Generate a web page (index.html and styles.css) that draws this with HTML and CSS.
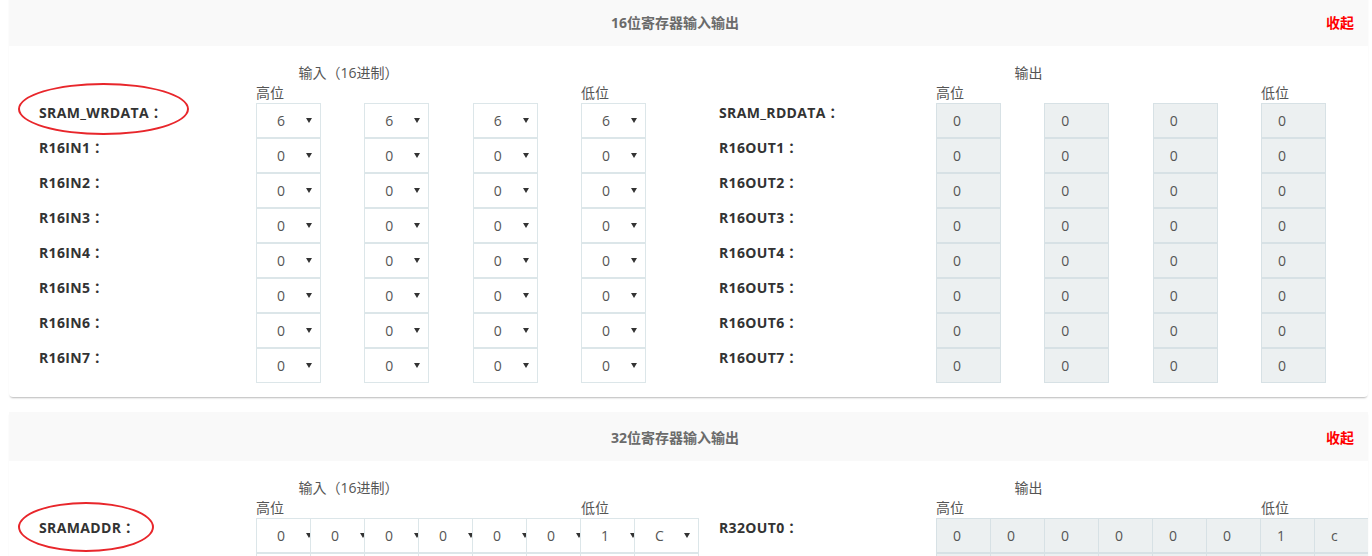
FILE: index.html
```html
<!DOCTYPE html>
<html lang="zh-CN">
<head>
<meta charset="utf-8">
<title>寄存器输入输出</title>
<link rel="stylesheet" href="styles.css">
</head>
<body>
<div class="page">
  <section class="panel">
    <div class="panel-head"><h2 class="panel-title">16位寄存器输入输出</h2><a class="panel-toggle">收起</a></div>
    <div class="panel-body">
      <div class="half">
        <div class="caption-row">输入（16进制）</div>
        <div class="hilo-row grid4"><span>高位</span><span></span><span></span><span>低位</span></div>
        <div class="reg-row"><div class="reg-label"><span class="mark mark-wr"></span>SRAM_WRDATA：</div><div class="grid4"><div class="sel"><span>6</span><i class="caret"></i></div><div class="sel"><span>6</span><i class="caret"></i></div><div class="sel"><span>6</span><i class="caret"></i></div><div class="sel"><span>6</span><i class="caret"></i></div></div></div>
        <div class="reg-row"><div class="reg-label">R16IN1：</div><div class="grid4"><div class="sel"><span>0</span><i class="caret"></i></div><div class="sel"><span>0</span><i class="caret"></i></div><div class="sel"><span>0</span><i class="caret"></i></div><div class="sel"><span>0</span><i class="caret"></i></div></div></div>
        <div class="reg-row"><div class="reg-label">R16IN2：</div><div class="grid4"><div class="sel"><span>0</span><i class="caret"></i></div><div class="sel"><span>0</span><i class="caret"></i></div><div class="sel"><span>0</span><i class="caret"></i></div><div class="sel"><span>0</span><i class="caret"></i></div></div></div>
        <div class="reg-row"><div class="reg-label">R16IN3：</div><div class="grid4"><div class="sel"><span>0</span><i class="caret"></i></div><div class="sel"><span>0</span><i class="caret"></i></div><div class="sel"><span>0</span><i class="caret"></i></div><div class="sel"><span>0</span><i class="caret"></i></div></div></div>
        <div class="reg-row"><div class="reg-label">R16IN4：</div><div class="grid4"><div class="sel"><span>0</span><i class="caret"></i></div><div class="sel"><span>0</span><i class="caret"></i></div><div class="sel"><span>0</span><i class="caret"></i></div><div class="sel"><span>0</span><i class="caret"></i></div></div></div>
        <div class="reg-row"><div class="reg-label">R16IN5：</div><div class="grid4"><div class="sel"><span>0</span><i class="caret"></i></div><div class="sel"><span>0</span><i class="caret"></i></div><div class="sel"><span>0</span><i class="caret"></i></div><div class="sel"><span>0</span><i class="caret"></i></div></div></div>
        <div class="reg-row"><div class="reg-label">R16IN6：</div><div class="grid4"><div class="sel"><span>0</span><i class="caret"></i></div><div class="sel"><span>0</span><i class="caret"></i></div><div class="sel"><span>0</span><i class="caret"></i></div><div class="sel"><span>0</span><i class="caret"></i></div></div></div>
        <div class="reg-row"><div class="reg-label">R16IN7：</div><div class="grid4"><div class="sel"><span>0</span><i class="caret"></i></div><div class="sel"><span>0</span><i class="caret"></i></div><div class="sel"><span>0</span><i class="caret"></i></div><div class="sel"><span>0</span><i class="caret"></i></div></div></div>
      </div>
      <div class="half">
        <div class="caption-row">输出</div>
        <div class="hilo-row grid4"><span>高位</span><span></span><span></span><span>低位</span></div>
        <div class="reg-row"><div class="reg-label">SRAM_RDDATA：</div><div class="grid4"><div class="out">0</div><div class="out">0</div><div class="out">0</div><div class="out">0</div></div></div>
        <div class="reg-row"><div class="reg-label">R16OUT1：</div><div class="grid4"><div class="out">0</div><div class="out">0</div><div class="out">0</div><div class="out">0</div></div></div>
        <div class="reg-row"><div class="reg-label">R16OUT2：</div><div class="grid4"><div class="out">0</div><div class="out">0</div><div class="out">0</div><div class="out">0</div></div></div>
        <div class="reg-row"><div class="reg-label">R16OUT3：</div><div class="grid4"><div class="out">0</div><div class="out">0</div><div class="out">0</div><div class="out">0</div></div></div>
        <div class="reg-row"><div class="reg-label">R16OUT4：</div><div class="grid4"><div class="out">0</div><div class="out">0</div><div class="out">0</div><div class="out">0</div></div></div>
        <div class="reg-row"><div class="reg-label">R16OUT5：</div><div class="grid4"><div class="out">0</div><div class="out">0</div><div class="out">0</div><div class="out">0</div></div></div>
        <div class="reg-row"><div class="reg-label">R16OUT6：</div><div class="grid4"><div class="out">0</div><div class="out">0</div><div class="out">0</div><div class="out">0</div></div></div>
        <div class="reg-row"><div class="reg-label">R16OUT7：</div><div class="grid4"><div class="out">0</div><div class="out">0</div><div class="out">0</div><div class="out">0</div></div></div>
      </div>
    </div>
  </section>

  <section class="panel">
    <div class="panel-head"><h2 class="panel-title">32位寄存器输入输出</h2><a class="panel-toggle">收起</a></div>
    <div class="panel-body">
      <div class="half">
        <div class="caption-row">输入（16进制）</div>
        <div class="hilo-row grid4"><span>高位</span><span></span><span></span><span>低位</span></div>
        <div class="reg-row"><div class="reg-label"><span class="mark mark-addr"></span>SRAMADDR：</div><div class="row8"><div class="sel"><span>0</span><i class="caret"></i></div><div class="sel"><span>0</span><i class="caret"></i></div><div class="sel"><span>0</span><i class="caret"></i></div><div class="sel"><span>0</span><i class="caret"></i></div><div class="sel"><span>0</span><i class="caret"></i></div><div class="sel"><span>0</span><i class="caret"></i></div><div class="sel"><span>1</span><i class="caret"></i></div><div class="sel"><span>C</span><i class="caret"></i></div></div></div>
        <div class="reg-row"><div class="reg-label"></div><div class="row8"><div class="sel"></div><div class="sel"></div><div class="sel"></div><div class="sel"></div><div class="sel"></div><div class="sel"></div><div class="sel"></div><div class="sel"></div></div></div>
      </div>
      <div class="half">
        <div class="caption-row">输出</div>
        <div class="hilo-row grid4"><span>高位</span><span></span><span></span><span>低位</span></div>
        <div class="reg-row"><div class="reg-label">R32OUT0：</div><div class="row8 out8"><div class="out">0</div><div class="out">0</div><div class="out">0</div><div class="out">0</div><div class="out">0</div><div class="out">0</div><div class="out">1</div><div class="out">c</div></div></div>
        <div class="reg-row"><div class="reg-label"></div><div class="row8 out8"><div class="out"></div><div class="out"></div><div class="out"></div><div class="out"></div><div class="out"></div><div class="out"></div><div class="out"></div><div class="out"></div></div></div>
      </div>
    </div>
  </section>
</div>
</body>
</html>
```
FILE: styles.css
```css
html, body {
  margin: 0;
  padding: 0;
  background: #fff;
  overflow: hidden;
}

body {
  font-family: "Open Sans", "Noto Sans CJK SC", sans-serif;
  font-size: 14px;
  color: #555;
}

.page {
  width: 1359px;
  margin: -3px 0 0 9px;
}

.panel {
  background: #fff;
  border-radius: 0 0 4px 4px;
  box-shadow: 0 2px 2px -1px rgba(0, 0, 0, 0.28);
  overflow: hidden;
  margin-bottom: 15px;
}

.panel-head {
  display: flex;
  align-items: center;
  height: 49px;
  background: #f9f9f9;
}

.panel-title {
  flex: 1;
  margin: 0;
  padding-left: 15px;
  text-align: center;
  font-size: 14px;
  font-weight: bold;
  color: #6b6b6b;
}

.panel-toggle {
  margin-right: 14px;
  font-size: 14px;
  font-weight: bold;
  color: #ff0000;
  cursor: pointer;
}

.panel-body {
  display: flex;
  padding: 16px 0 14px;
}

.half {
  width: 680px;
  flex: none;
  padding-left: 30px;
  box-sizing: border-box;
}

.caption-row {
  margin-left: 217px;
  width: 185px;
  text-align: center;
  line-height: 21px;
  color: #555;
  font-family: "Open Sans", "Noto Sans CJK TC", sans-serif;
  font-feature-settings: "locl" 0;
}

.hilo-row {
  margin-left: 217px;
  line-height: 20px;
  color: #555;
}

.grid4 {
  display: grid;
  grid-template-columns: repeat(4, 108.33px);
}

.reg-row {
  display: flex;
  height: 35px;
}

.reg-label {
  position: relative;
  width: 217px;
  flex: none;
  line-height: 20px;
  font-family: "Open Sans", "Noto Sans CJK TC", sans-serif;
  font-feature-settings: "locl" 0;
  font-weight: bold;
  letter-spacing: 0.35px;
  color: #333;
}

.mark {
  position: absolute;
  left: -21px;
  border: 2px solid #e8262b;
  border-radius: 50%;
  box-sizing: border-box;
  pointer-events: none;
}

.mark-wr {
  top: -20px;
  width: 171px;
  height: 52px;
}

.mark-addr {
  top: -16px;
  width: 136px;
  height: 50px;
}

.sel {
  display: flex;
  align-items: center;
  justify-content: space-between;
  width: 65px;
  height: 35px;
  padding: 0 8px 0 20px;
  box-sizing: border-box;
  background: #fff;
  border: 1px solid #dce6e9;
  color: #555;
}

.caret {
  width: 0;
  height: 0;
  border-left: 3px solid transparent;
  border-right: 3px solid transparent;
  border-top: 5px solid #333;
}

.out {
  width: 65px;
  height: 35px;
  padding-left: 16px;
  box-sizing: border-box;
  background: #ecf0f1;
  border: 1px solid #d7e1e5;
  line-height: 33px;
  color: #555;
}

.row8 {
  display: flex;
}

.row8 .sel {
  flex: none;
  margin-right: -11px;
}

.row8 .sel:last-child {
  margin-right: 0;
}

.out8 .out {
  flex: none;
  width: 55px;
  margin-right: -1px;
}
```
